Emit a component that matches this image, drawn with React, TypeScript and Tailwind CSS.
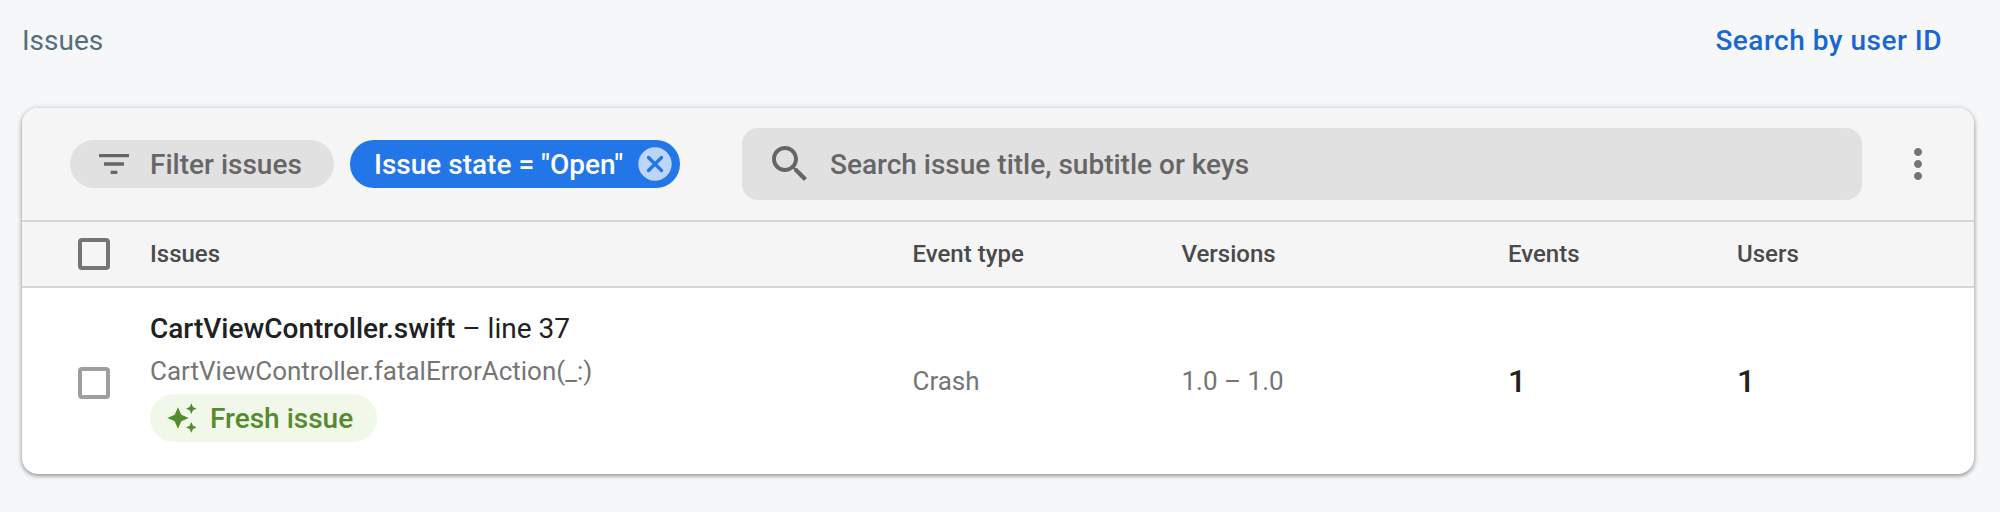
import type { ReactNode } from "react";

function Icon({ d, className }: { d: string; className: string }) {
  return (
    <svg viewBox="0 0 24 24" fill="currentColor" className={className}>
      <path d={d} />
    </svg>
  );
}

const FILTER = "M10 18h4v-2h-4v2zM3 6v2h18V6H3zm3 7h12v-2H6v2z";
const SEARCH =
  "M15.5 14h-.79l-.28-.27C15.41 12.59 16 11.11 16 9.5 16 5.91 13.09 3 9.5 3S3 5.91 3 9.5 5.91 16 9.5 16c1.61 0 3.09-.59 4.23-1.57l.27.28v.79l5 4.99L20.49 19l-4.99-5zm-6 0C7.01 14 5 11.99 5 9.5S7.01 5 9.5 5 14 7.01 14 9.5 11.99 14 9.5 14z";
const MORE =
  "M12 8c1.1 0 2-.9 2-2s-.9-2-2-2-2 .9-2 2 .9 2 2 2zm0 2c-1.1 0-2 .9-2 2s.9 2 2 2 2-.9 2-2-.9-2-2-2zm0 6c-1.1 0-2 .9-2 2s.9 2 2 2 2-.9 2-2-.9-2-2-2z";
const SPARKLE =
  "M19 9l1.25-2.75L23 5l-2.75-1.25L19 1l-1.25 2.75L15 5l2.75 1.25L19 9zm-7.5.5L9 4 6.5 9.5 1 12l5.5 2.5L9 20l2.5-5.5L17 12l-5.5-2.5zM19 15l-1.25 2.75L15 19l2.75 1.25L19 23l1.25-2.75L23 19l-2.75-1.25L19 15z";

function CancelIcon() {
  return (
    <svg viewBox="0 0 24 24" fill="none" className="size-10">
      <circle cx="12" cy="12" r="10" fill="#bdd5f8" />
      <path d="M8.1 8.1l7.8 7.8M15.9 8.1l-7.8 7.8" stroke="#2376e7" strokeWidth="2" strokeLinecap="round" />
    </svg>
  );
}

function Row({ className, children }: { className: string; children: ReactNode }) {
  return (
    <div className={"grid grid-cols-[72px_762.5px_269px_326.5px_229px_1fr] items-center pl-14 " + className}>
      {children}
    </div>
  );
}

export default function App() {
  return (
    <div className="h-[512px] w-[2000px] overflow-hidden bg-[#f6f7f9] font-['Roboto',sans-serif] whitespace-nowrap">
      <header className="flex h-[108px] items-start justify-between pt-[21px] pr-[58px] pl-[22px] text-[28px] leading-10">
        <h2 className="text-[#546e7a]">Issues</h2>
        <a className="font-medium tracking-[0.5px] text-[#1967d2]">Search by user ID</a>
      </header>
      <section className="ml-[22px] h-[366px] w-[1952px] overflow-hidden rounded-2xl bg-white shadow-[0_2px_4px_rgba(0,0,0,0.34),0_0_6px_rgba(0,0,0,0.14)]">
        <div className="flex h-28 items-center bg-[#f5f5f5] pl-12">
          <button className="flex h-12 w-[264px] items-center rounded-full bg-[#e1e1e1] pl-6 text-[28px] font-medium text-[#666]">
            <Icon d={FILTER} className="mr-4 size-10" />
            <span className="pt-0.5">Filter issues</span>
          </button>
          <div className="ml-4 flex h-12 w-[330px] items-center justify-between rounded-full bg-[#2376e7] pr-[5px] pl-6 text-[28px] font-medium text-white">
            <span className="pt-0.5">Issue state = "Open"</span>
            <CancelIcon />
          </div>
          <div className="ml-[62px] flex h-[72px] w-[1120px] items-center rounded-2xl bg-[#e1e1e1] pl-6 text-[28px] font-medium text-[#666]">
            <Icon d={SEARCH} className="mr-4 size-12" />
            <span className="pt-0.5">Search issue title, subtitle or keys</span>
          </div>
          <Icon d={MORE} className="ml-8 size-12 text-[#757575]" />
        </div>
        <Row className="h-[68px] border-y-2 border-[#d6d6d6] bg-[#f5f5f5] text-2xl font-medium text-[#4a4a4a]">
          <span className="size-8 rounded border-4 border-[#757575]" />
          <span>Issues</span>
          <span>Event type</span>
          <span>Versions</span>
          <span>Events</span>
          <span>Users</span>
        </Row>
        <Row className="h-[186px] text-[26px] leading-10 text-[#757575]">
          <span className="mt-1 size-8 rounded border-4 border-[#9e9e9e]" />
          <div className="self-start pt-[21px]">
            <div className="text-[28px] text-[#212121]">
              <span className="font-medium">CartViewController.swift</span> – line 37
            </div>
            <div className="mt-0.5">CartViewController.fatalErrorAction(_:)</div>
            <div className="mt-[3px] flex h-12 w-[227px] items-center rounded-full bg-[#f1f8e9] pl-4 text-[28px] font-medium text-[#558b2f]">
              <Icon d={SPARKLE} className="mr-3 size-8" />
              <span className="pt-0.5">Fresh issue</span>
            </div>
          </div>
          <span>Crash</span>
          <span>1.0 – 1.0</span>
          <span className="text-[32px] font-medium text-[#212121]">1</span>
          <span className="text-[32px] font-medium text-[#212121]">1</span>
        </Row>
      </section>
    </div>
  );
}
